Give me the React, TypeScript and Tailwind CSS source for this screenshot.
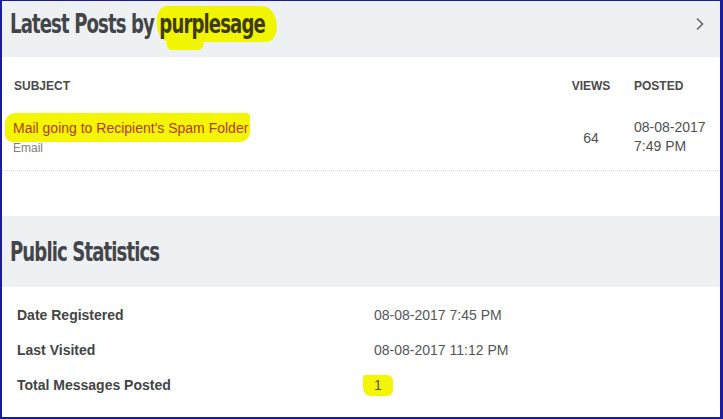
import React from "react";

export default function App() {
  return (
    <div className="w-[723px] h-[419px] bg-white border-l-2 border-r-[3px] border-t border-b-2 border-[#1b1b9c] flex flex-col overflow-hidden font-['Liberation_Sans',Arial,sans-serif]">
      {/* Header band */}
      <div className="h-[56px] bg-[#edf1f4] flex items-start justify-between pl-[8px] pr-[15px] pt-[9px] shrink-0">
        <h1 className="font-['DejaVu_Sans_Condensed','DejaVu_Sans',sans-serif] font-bold text-[27px] leading-none text-[#444548] tracking-[-1.2px] origin-left scale-x-[0.745] whitespace-nowrap">
          Latest Posts by{" "}
          <span className="relative inline-block">
            <span className="absolute left-[-3px] right-[-16px] top-[-4px] h-[36px] bg-[#f2f500] rounded-[14px_20px_14px_18px]" />
            <span className="absolute left-[10px] w-[50px] top-[26px] h-[14px] bg-[#f2f500] rounded-[10px]" />
            <span className="relative text-[#3d3c10]">purplesage</span>
          </span>
        </h1>
        <svg width="10" height="14" viewBox="0 0 10 14" className="mt-[7px] shrink-0">
          <path d="M2 1.5 L7.5 7 L2 12.5" fill="none" stroke="#666" strokeWidth="1.6" />
        </svg>
      </div>

      {/* Table header */}
      <div className="flex items-center h-[56px] text-[12px] font-bold text-[#4a4a4a] shrink-0">
        <div className="flex-1 pl-[12px] pt-[2px]">SUBJECT</div>
        <div className="w-[40px] text-center mr-[23px] pt-[2px]">VIEWS</div>
        <div className="w-[86px] pt-[2px]">POSTED</div>
      </div>

      {/* Row */}
      <div className="flex items-start h-[58px] border-b border-dotted border-[#dcdcdc] shrink-0">
        <div className="flex-1 pl-[11px] relative">
          <span className="absolute left-[3px] top-0 w-[245px] h-[29px] bg-[#f4f500] rounded-[10px_4px_10px_8px]" />
          <div className="relative text-[14px] leading-[18px] text-[#b33a22] mt-[6px]">
            Mail going to Recipient's Spam Folder
          </div>
          <div className="relative text-[12px] leading-[18px] text-[#808080] mt-[2px]">Email</div>
        </div>
        <div className="w-[40px] text-center mr-[23px] text-[14px] leading-[20px] text-[#505050] mt-[15px]">64</div>
        <div className="w-[86px] text-[14px] leading-[19px] text-[#505050] mt-[5px]">
          08-08-2017
          <br />
          7:49 PM
        </div>
      </div>

      <div className="h-[45px] shrink-0" />

      {/* Stats band */}
      <div className="h-[71px] bg-[#edf1f4] flex items-start pl-[8px] pt-[22px] shrink-0">
        <h2 className="font-['DejaVu_Sans_Condensed','DejaVu_Sans',sans-serif] font-bold text-[27px] leading-none text-[#444548] tracking-[-1.2px] origin-left scale-x-[0.745] whitespace-nowrap">
          Public Statistics
        </h2>
      </div>

      {/* Stats rows */}
      <div className="flex flex-col pt-[11px] text-[14px] text-[#444]">
        {[
          ["Date Registered", "08-08-2017 7:45 PM", false],
          ["Last Visited", "08-08-2017 11:12 PM", false],
          ["Total Messages Posted", "1", true],
        ].map(([k, v, hl]) => (
          <div key={k as string} className="flex items-center h-[35px]">
            <div className="w-[357px] pl-[15px] font-bold text-[#444]">{k}</div>
            <div className="relative pl-[15px] text-[#555]">
              {hl ? (
                <span className="absolute left-[4px] top-0 w-[30px] h-[21px] bg-[#f4f500] rounded-[3px_6px_6px_8px]" />
              ) : null}
              <span className="relative">{v}</span>
            </div>
          </div>
        ))}
      </div>
    </div>
  );
}
